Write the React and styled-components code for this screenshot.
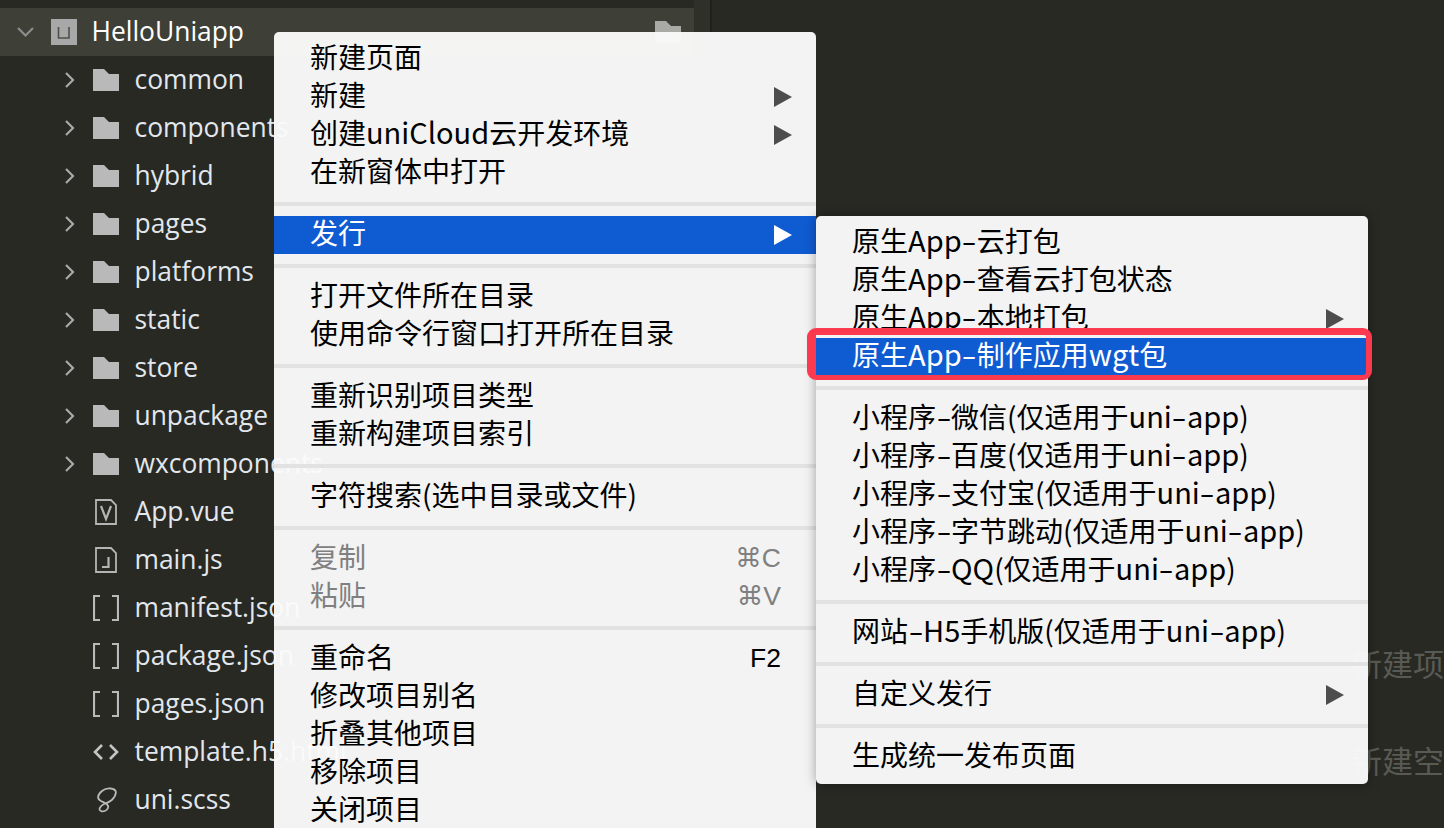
import React from 'react';
import styled, { createGlobalStyle } from 'styled-components';

const GlobalStyle = createGlobalStyle`
	html, body {
		margin: 0;
		padding: 0;
		background: #282923;
	}
`;

const Page = styled.div`
	position: relative;
	display: flex;
	width: 1444px;
	height: 828px;
	overflow: hidden;
	background: #282923;
`;

const Sidebar = styled.aside`
	display: flex;
	flex: 0 0 712px;
	border-right: 2px solid #1f201b;
	box-sizing: border-box;
`;

const Tree = styled.div`
	flex: 1;
	min-width: 0;
	padding-top: 8px;
	font-family: 'Open Sans', 'DejaVu Sans', sans-serif;
	font-size: 26.4px;
	font-weight: 500;
`;

const ScrollTrack = styled.div`
	flex: 0 0 16px;
	background: #2f302a;
`;

const RootRow = styled.div`
	display: flex;
	align-items: center;
	height: 48px;
	padding: 0 13px 0 17px;
	background: #3e3f36;
	color: #ffffff;
`;

const TreeRow = styled.div`
	display: flex;
	align-items: center;
	height: 48px;
	padding-left: 65px;
	color: #e2e7ee;
	white-space: nowrap;
`;

const ChevronSlot = styled.span`
	display: flex;
	flex: 0 0 ${(props) => (props.$root ? '34px' : '28px')};
`;

const IconSlot = styled.span`
	display: flex;
	flex: 0 0 26px;
	margin-right: 16px;
`;

const TreeLabel = styled.span`
	position: relative;
	top: -1px;
	left: -0.5px;
`;

const RootName = styled(TreeLabel)`
	flex: 1;
	margin-left: 15px;
`;

const Editor = styled.main`
	flex: 1;
	min-width: 0;
	padding: 644px 0 0 639px;
	color: #595a54;
	font-family: 'Noto Sans CJK SC', sans-serif;
	font-size: 31px;
	line-height: 38px;
	white-space: nowrap;
`;

const Hint = styled.div`
	margin-bottom: 59px;
`;

const Menu = styled.div`
	position: absolute;
	left: 274px;
	top: 32px;
	width: 542px;
	height: 810px;
	padding-top: 6px;
	box-sizing: border-box;
	background: rgba(250, 250, 250, 0.97);
	border-radius: 5px;
	font-family: 'Noto Sans CJK SC', 'Liberation Sans', sans-serif;
	font-size: 28px;
	color: #000000;
`;

const SubMenu = styled(Menu)`
	left: 100%;
	top: 2px;
	width: 552px;
	height: 568px;
	box-shadow: 0 0 12px rgba(0, 0, 0, 0.35);
	z-index: 2;
`;

const Item = styled.div`
	position: relative;
	display: flex;
	align-items: center;
	justify-content: space-between;
	height: 38px;
	padding: 0 24px 0 36px;
	white-space: nowrap;
	color: ${(props) => (props.$disabled ? '#808080' : props.$active ? '#ffffff' : '#000000')};

	${(props) =>
		props.$active &&
		`
		&::before {
			content: '';
			position: absolute;
			inset: 2px 0 -2px 0;
			background: #0f5bd2;
		}
	`}
`;

const ItemLabel = styled.span`
	position: relative;
	top: -1px;
`;

const Latin = styled.span`
	font-size: 29px;
	line-height: 0;
`;

const Dash = styled.span`
	display: inline-block;
	margin: 0 2.5px;
	line-height: 0;
	transform: scaleX(1.5);
`;

const Arrow = styled.span`
	position: relative;
	top: 2px;
	width: 0;
	height: 0;
	border-style: solid;
	border-width: 10px 0 10px 18px;
	border-color: transparent transparent transparent ${(props) => (props.$light ? '#ffffff' : '#4d4d4d')};
`;

const Shortcut = styled.span`
	position: relative;
	top: 1px;
	margin-right: 11px;
	font-family: 'Liberation Sans', 'DejaVu Sans', sans-serif;
	font-size: 26.5px;
`;

const Separator = styled.div`
	height: 4px;
	margin: 12px 0 8px;
	background: #e2e2e2;
`;

const Callout = styled.div`
	position: absolute;
	top: -8px;
	left: -9px;
	right: -4px;
	bottom: -6px;
	border-style: solid;
	border-color: #fb3a50;
	border-width: 7px 6px 5px 9px;
	border-radius: 9px;
	pointer-events: none;
`;

const Chevron = ({ open }) =>
	open ? (
		<svg width="17" height="10" viewBox="0 0 17 10" fill="none" stroke="#8c8c8c" strokeWidth="2.2">
			<path d="M1 1l7.5 7.5L16 1" />
		</svg>
	) : (
		<svg width="10" height="16" viewBox="0 0 10 16" fill="none" stroke="#a8a8a8" strokeWidth="2.2">
			<path d="M1 1l7 7-7 7" />
		</svg>
	);

const ProjectIcon = () => (
	<svg width="26" height="26" viewBox="0 0 26 26">
		<rect width="26" height="26" fill="#a8a8a8" />
		<path d="M7.5 8v11h10.5V8" fill="none" stroke="#4f4f49" strokeWidth="1.6" />
	</svg>
);

const FolderIcon = ({ color = '#b9b9b9' }) => (
	<svg width="26" height="22" viewBox="0 0 26 22">
		<path d="M0 0h11l5 5h10v17H0z" fill={color} />
	</svg>
);

const VueIcon = () => (
	<svg width="26" height="26" viewBox="0 0 26 26" fill="none" stroke="#b4b4b4" strokeWidth="1.8">
		<path d="M3 1h15l5 5v19H3z" />
		<path d="M8 7l5 13 5-13" strokeWidth="2.2" />
	</svg>
);

const ScriptIcon = () => (
	<svg width="26" height="26" viewBox="0 0 26 26" fill="none" stroke="#b4b4b4" strokeWidth="1.8">
		<path d="M3 1h15l5 5v19H3z" />
		<path d="M15.5 10v10H9" strokeWidth="2.2" />
	</svg>
);

const BracketIcon = () => (
	<svg width="26" height="26" viewBox="0 0 26 26" fill="none" stroke="#b9b9b9" strokeWidth="2.2">
		<path d="M7 1H1v24h6M19 1h6v24h-6" />
	</svg>
);

const TagIcon = () => (
	<svg width="26" height="16" viewBox="0 0 26 16" fill="none" stroke="#c4c4c4" strokeWidth="2.6">
		<path d="M9 1L2 8l7 7M17 1l7 7-7 7" />
	</svg>
);

const SassIcon = () => (
	<svg width="26" height="26" viewBox="0 0 26 26" fill="none" stroke="#b9b9b9" strokeWidth="1.8">
		<path d="M23 5C22 1 14 0 9 4 4 8 4 12 8 14c4 2 8 3 7 7-1 3-5 4-7 3-3-1-1-5 3-7 5-2 11-4 12-12" />
	</svg>
);

const folders = ['common', 'components', 'hybrid', 'pages', 'platforms', 'static', 'store', 'unpackage', 'wxcomponents'];

const files = [
	{ name: 'App.vue', icon: <VueIcon /> },
	{ name: 'main.js', icon: <ScriptIcon /> },
	{ name: 'manifest.json', icon: <BracketIcon /> },
	{ name: 'package.json', icon: <BracketIcon /> },
	{ name: 'pages.json', icon: <BracketIcon /> },
	{ name: 'template.h5.html', icon: <TagIcon /> },
	{ name: 'uni.scss', icon: <SassIcon /> },
];

// the mac system font draws latin and the hyphen wider than the CJK font here
const renderLabel = (label) =>
	label.split(/([A-Za-z0-9-]+)/).map((part, i) => {
		if (i % 2 === 0) return part;
		return (
			<Latin key={i}>
				{part.split(/(-)/).map((bit, j) => (bit === '-' ? <Dash key={j}>-</Dash> : bit))}
			</Latin>
		);
	});

const MenuItem = ({ label, arrow, shortcut, disabled, active, children }) => (
	<Item $disabled={disabled} $active={active}>
		<ItemLabel>{renderLabel(label)}</ItemLabel>
		{shortcut && <Shortcut>{shortcut}</Shortcut>}
		{arrow && <Arrow $light={active} />}
		{children}
	</Item>
);

const App = () => (
	<Page>
		<GlobalStyle />
		<Sidebar>
			<Tree>
				<RootRow>
					<ChevronSlot $root>
						<Chevron open />
					</ChevronSlot>
					<ProjectIcon />
					<RootName>HelloUniapp</RootName>
					<FolderIcon color="#a9a9a6" />
				</RootRow>
				{folders.map((name) => (
					<TreeRow key={name}>
						<ChevronSlot>
							<Chevron />
						</ChevronSlot>
						<IconSlot>
							<FolderIcon />
						</IconSlot>
						<TreeLabel>{name}</TreeLabel>
					</TreeRow>
				))}
				{files.map((file) => (
					<TreeRow key={file.name}>
						<ChevronSlot />
						<IconSlot>{file.icon}</IconSlot>
						<TreeLabel>{file.name}</TreeLabel>
					</TreeRow>
				))}
			</Tree>
			<ScrollTrack />
		</Sidebar>
		<Editor>
			<Hint>新建项目</Hint>
			<Hint>新建空白文件</Hint>
		</Editor>
		<Menu>
			<MenuItem label="新建页面" />
			<MenuItem label="新建" arrow />
			<MenuItem label="创建uniCloud云开发环境" arrow />
			<MenuItem label="在新窗体中打开" />
			<Separator />
			<MenuItem label="发行" arrow active>
				<SubMenu>
					<MenuItem label="原生App-云打包" />
					<MenuItem label="原生App-查看云打包状态" />
					<MenuItem label="原生App-本地打包" arrow />
					<MenuItem label="原生App-制作应用wgt包" active>
						<Callout />
					</MenuItem>
					<Separator />
					<MenuItem label="小程序-微信(仅适用于uni-app)" />
					<MenuItem label="小程序-百度(仅适用于uni-app)" />
					<MenuItem label="小程序-支付宝(仅适用于uni-app)" />
					<MenuItem label="小程序-字节跳动(仅适用于uni-app)" />
					<MenuItem label="小程序-QQ(仅适用于uni-app)" />
					<Separator />
					<MenuItem label="网站-H5手机版(仅适用于uni-app)" />
					<Separator />
					<MenuItem label="自定义发行" arrow />
					<Separator />
					<MenuItem label="生成统一发布页面" />
				</SubMenu>
			</MenuItem>
			<Separator />
			<MenuItem label="打开文件所在目录" />
			<MenuItem label="使用命令行窗口打开所在目录" />
			<Separator />
			<MenuItem label="重新识别项目类型" />
			<MenuItem label="重新构建项目索引" />
			<Separator />
			<MenuItem label="字符搜索(选中目录或文件)" />
			<Separator />
			<MenuItem label="复制" shortcut="⌘C" disabled />
			<MenuItem label="粘贴" shortcut="⌘V" disabled />
			<Separator />
			<MenuItem label="重命名" shortcut="F2" />
			<MenuItem label="修改项目别名" />
			<MenuItem label="折叠其他项目" />
			<MenuItem label="移除项目" />
			<MenuItem label="关闭项目" />
		</Menu>
	</Page>
);

export default App;
